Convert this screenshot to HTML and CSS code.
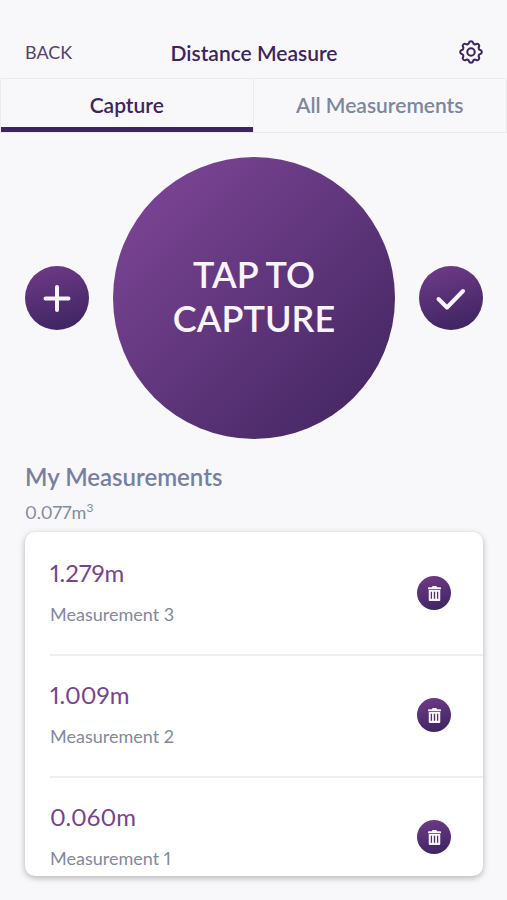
FILE: index.html
```html
<!DOCTYPE html>
<html lang="en">
<head>
<meta charset="utf-8">
<meta name="viewport" content="width=device-width, initial-scale=1">
<title>Distance Measure</title>
<link rel="stylesheet" href="styles.css">
</head>
<body>
<svg class="sprite" aria-hidden="true">
  <symbol id="trash" viewBox="0 0 14 16">
    <path fill="currentColor" fill-rule="evenodd" d="M0 2.2Q0 1.4 .8 1.4H4.2Q4.4 0 5.4 0H8.6Q9.6 0 9.8 1.4H13.2Q14 1.4 14 2.2V3.4H0ZM.8 4.3H13.2V15Q13.2 16 12.200 16H1.800Q.8 16 .8 15ZM3 6.2V13.6H4.300V6.2ZM6.3 6.2V13.6H7.700V6.2ZM9.700 6.2V13.6H11V6.2Z"/>
  </symbol>
</svg>
<div class="app">
  <header class="header">
    <a class="back" href="#">BACK</a>
    <h1 class="title">Distance Measure</h1>
    <button class="settings" type="button" aria-label="Settings">
      <svg viewBox="2 2 20 20" fill="none" stroke="currentColor" stroke-width="1.7" stroke-linejoin="round">
        <path d="M10.325 4.317c.426-1.756 2.924-1.756 3.35 0a1.724 1.724 0 002.573 1.066c1.543-.94 3.31.826 2.37 2.37a1.724 1.724 0 001.065 2.572c1.756.426 1.756 2.924 0 3.35a1.724 1.724 0 00-1.066 2.573c.94 1.543-.826 3.31-2.37 2.37a1.724 1.724 0 00-2.572 1.065c-.426 1.756-2.924 1.756-3.35 0a1.724 1.724 0 00-2.573-1.066c-1.543.94-3.31-.826-2.37-2.37a1.724 1.724 0 00-1.065-2.572c-1.756-.426-1.756-2.924 0-3.35a1.724 1.724 0 001.066-2.573c-.94-1.543.826-3.31 2.37-2.37.996.608 2.296.07 2.572-1.065z"/>
        <circle cx="12" cy="12" r="3.1"/>
      </svg>
    </button>
  </header>
  <nav class="tabs">
    <button class="tab tab-active" type="button">Capture</button>
    <button class="tab" type="button">All Measurements</button>
  </nav>
  <main class="content">
    <div class="controls">
      <button class="round" type="button" aria-label="Add">
        <svg viewBox="0 0 64 64" fill="none" stroke="currentColor" stroke-width="4" stroke-linecap="round"><path d="M32 21V44M20.500 32.500H43.500"/></svg>
      </button>
      <button class="capture" type="button">TAP TO<br>CAPTURE</button>
      <button class="round" type="button" aria-label="Done">
        <svg viewBox="0 0 64 64" fill="none" stroke="currentColor" stroke-width="4" stroke-linecap="round" stroke-linejoin="round"><path d="M19.500 33L28 41.500L44 25"/></svg>
      </button>
    </div>
    <h2 class="heading">My Measurements</h2>
    <p class="volume">0.077m<sup>3</sup></p>
    <ul class="list">
      <li class="item">
        <div class="reading"><p class="value">1.279m</p><p class="label">Measurement 3</p></div>
        <button class="delete" type="button" aria-label="Delete Measurement 3"><svg><use href="#trash"/></svg></button>
      </li>
      <li class="item">
        <div class="reading"><p class="value">1.009m</p><p class="label">Measurement 2</p></div>
        <button class="delete" type="button" aria-label="Delete Measurement 2"><svg><use href="#trash"/></svg></button>
      </li>
      <li class="item">
        <div class="reading"><p class="value">0.060m</p><p class="label">Measurement 1</p></div>
        <button class="delete" type="button" aria-label="Delete Measurement 1"><svg><use href="#trash"/></svg></button>
      </li>
    </ul>
  </main>
</div>
</body>
</html>
```
FILE: styles.css
```css
* { box-sizing: border-box; }
body, h1, h2, p, ul { margin: 0; padding: 0; }
body {
  background: #f8f8fb;
  color: #3c2461;
  font-family: Lato, "Open Sans", sans-serif;
  font-variant-numeric: proportional-nums;
}
button {
  border: 0;
  padding: 0;
  background: none;
  color: inherit;
  font: inherit;
  cursor: pointer;
}
svg { display: block; }
.sprite { display: none; }
.app {
  display: flex;
  flex-direction: column;
  height: 100vh;
}
.header {
  display: grid;
  grid-template-columns: 1fr auto 1fr;
  align-items: center;
  padding: 26px 24px 0 25px;
  height: 78px;
}
.back {
  color: #51426f;
  font-size: 18px;
  text-decoration: none;
}
.title {
  font-size: 21px;
  font-weight: 600;
}
.settings { justify-self: end; }
.settings svg { width: 24px; height: 24px; }
.tabs {
  display: grid;
  grid-template-columns: 1fr 1fr;
  height: 55px;
  border: 1px solid #ececf0;
}
.tab {
  padding-bottom: 2px;
  color: #7c86a1;
  font-size: 21px;
  font-weight: 600;
}
.tab-active {
  border-right: 1px solid #ececf0;
  box-shadow: inset 0 -5px #3c2461;
  color: #3c2461;
}
.content {
  display: flex;
  flex: 1;
  flex-direction: column;
  min-height: 0;
  padding: 24px 24px 24px 25px;
}
.controls {
  display: flex;
  align-items: center;
  justify-content: space-between;
  gap: 24px;
}
.round, .capture, .delete {
  border-radius: 50%;
  color: #f8f4fc;
}
.round, .delete {
  flex: none;
  background: linear-gradient(165deg, #6f3a87 5%, #3c2461 95%);
}
.round { width: 64px; height: 64px; }
.capture {
  flex: 0 1 282px;
  aspect-ratio: 1;
  padding-bottom: 4px;
  background: linear-gradient(135deg, #7b4494 10%, #422661 95%);
  font-size: 36px;
  font-weight: 600;
  line-height: 44px;
}
.heading {
  margin-top: 24px;
  color: #7680a1;
  font-size: 24px;
  font-weight: 600;
  line-height: 28px;
}
.volume {
  margin: 9px 0 8px;
  color: #8289a2;
  font-size: 18px;
  line-height: 24px;
}
.volume sup {
  font-size: 12px;
  line-height: 0;
}
.list {
  flex: 1;
  min-height: 0;
  overflow: hidden;
  border-radius: 10px;
  background: #fff;
  box-shadow: 0 2px 6px rgba(0, 0, 0, 0.28);
  list-style: none;
}
.item {
  display: flex;
  align-items: center;
  justify-content: space-between;
  height: 122px;
  margin-left: 25px;
  padding-right: 32px;
}
.item + .item { box-shadow: inset 0 2px #efeff1; }
.reading { padding-bottom: 3px; }
.value {
  color: #764391;
  font-size: 24px;
  line-height: 32px;
}
.label {
  margin-top: 13px;
  color: #8189a0;
  font-size: 18px;
  line-height: 24px;
}
.delete {
  display: grid;
  place-items: center;
  width: 34px;
  height: 34px;
}
.delete svg { width: 13px; height: 15px; }
```
